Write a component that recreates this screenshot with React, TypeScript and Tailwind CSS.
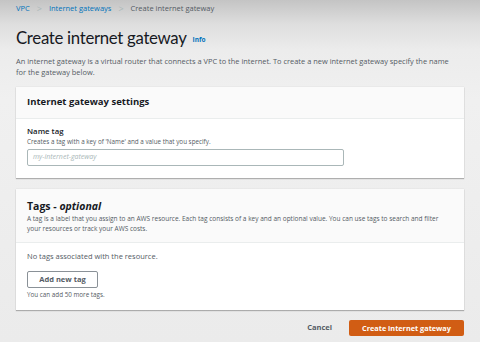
export default function App() {
  return (
    <div
      className="w-[480px] h-[342px] overflow-hidden bg-[linear-gradient(180deg,#c4c4c4_0px,#dedede_24px,#ececec_50px,#f0f0f0_100px,#ebebeb_342px)] text-[#16191f] px-4"
      style={{ fontFamily: '"Open Sans", "Noto Sans", sans-serif' }}
    >
      {/* Breadcrumb */}
      <div className="flex items-center gap-[7px] pt-[1px] h-[16px] text-[7.5px]">
        <span className="text-[#0073bb]">VPC</span>
        <span className="text-[#aab7b8] text-[9px]">&gt;</span>
        <span className="text-[#0073bb]">Internet gateways</span>
        <span className="text-[#aab7b8] text-[9px]">&gt;</span>
        <span className="text-[#545b64]">Create internet gateway</span>
      </div>

      {/* Title */}
      <div className="flex items-end gap-[6px] mt-[9px] h-[24px]">
        <h1 className="text-[16.8px] leading-[22px] tracking-[-0.3px] font-['Lato',sans-serif]">Create internet gateway</h1>
        <span className="text-[6.5px] font-bold text-[#0073bb] mb-[4px]">Info</span>
      </div>

      <p className="mt-[7px] text-[7.45px] leading-[11px] text-[#545b64] pr-[4px]">
        An internet gateway is a virtual router that connects a VPC to the internet. To create a new internet gateway specify the name <br />for the gateway below.
      </p>

      {/* Settings card */}
      <div className="mt-[9px] bg-white shadow-[0_1px_1px_rgba(0,0,0,0.25),0_0_1px_rgba(0,0,0,0.15)]">
        <div className="bg-[#fafafa] border-b border-[#eaeded] h-[32px] px-[11px] flex items-center">
          <h2 className="text-[9.5px] font-bold">Internet gateway settings</h2>
        </div>
        <div className="px-[11px] pt-[7px] pb-[12px]">
          <div className="text-[7.8px] leading-[11px] font-semibold">Name tag</div>
          <div className="text-[6.3px] leading-[9px] text-[#545b64]">Creates a tag with a key of 'Name' and a value that you specify.</div>
          <div className="mt-[3px] w-[317px] h-[17px] border border-[#aab7b8] rounded-[2px] flex items-center px-[5px]">
            <span className="text-[7px] italic text-[#aab7b8]">my-internet-gateway</span>
          </div>
        </div>
      </div>

      {/* Tags card */}
      <div className="mt-[11px] bg-white shadow-[0_1px_1px_rgba(0,0,0,0.25),0_0_1px_rgba(0,0,0,0.15)]">
        <div className="bg-[#fafafa] border-b border-[#eaeded] px-[11px] pt-[11px] pb-[9px]">
          <h2 className="text-[10.5px] leading-[13px] font-bold">
            Tags - <span className="italic">optional</span>
          </h2>
          <p className="mt-[1px] text-[6.5px] leading-[9.5px] text-[#545b64] pr-[10px]">
            A tag is a label that you assign to an AWS resource. Each tag consists of a key and an optional value. You can use tags to search and filter your resources or track your AWS costs.
          </p>
        </div>
        <div className="px-[11px] pt-[8px] pb-[11px]">
          <div className="text-[7.5px] leading-[11px] text-[#545b64]">No tags associated with the resource.</div>
          <button className="mt-[9px] w-[71px] h-[17px] border border-[#8a9197] rounded-[2px] bg-white text-[7.5px] font-bold text-[#545b64] flex items-center justify-center">
            Add new tag
          </button>
          <div className="mt-[2px] text-[6.3px] leading-[9px] text-[#545b64]">You can add 50 more tags.</div>
        </div>
      </div>

      {/* Footer */}
      <div className="mt-[10px] flex items-center justify-end gap-[17px]">
        <span className="text-[7.5px] font-bold text-[#545b64]">Cancel</span>
        <button className="w-[115px] h-[16px] bg-[#d15d14] rounded-[2px] text-white text-[7.3px] font-bold flex items-center justify-center">
          Create internet gateway
        </button>
      </div>
    </div>
  );
}
